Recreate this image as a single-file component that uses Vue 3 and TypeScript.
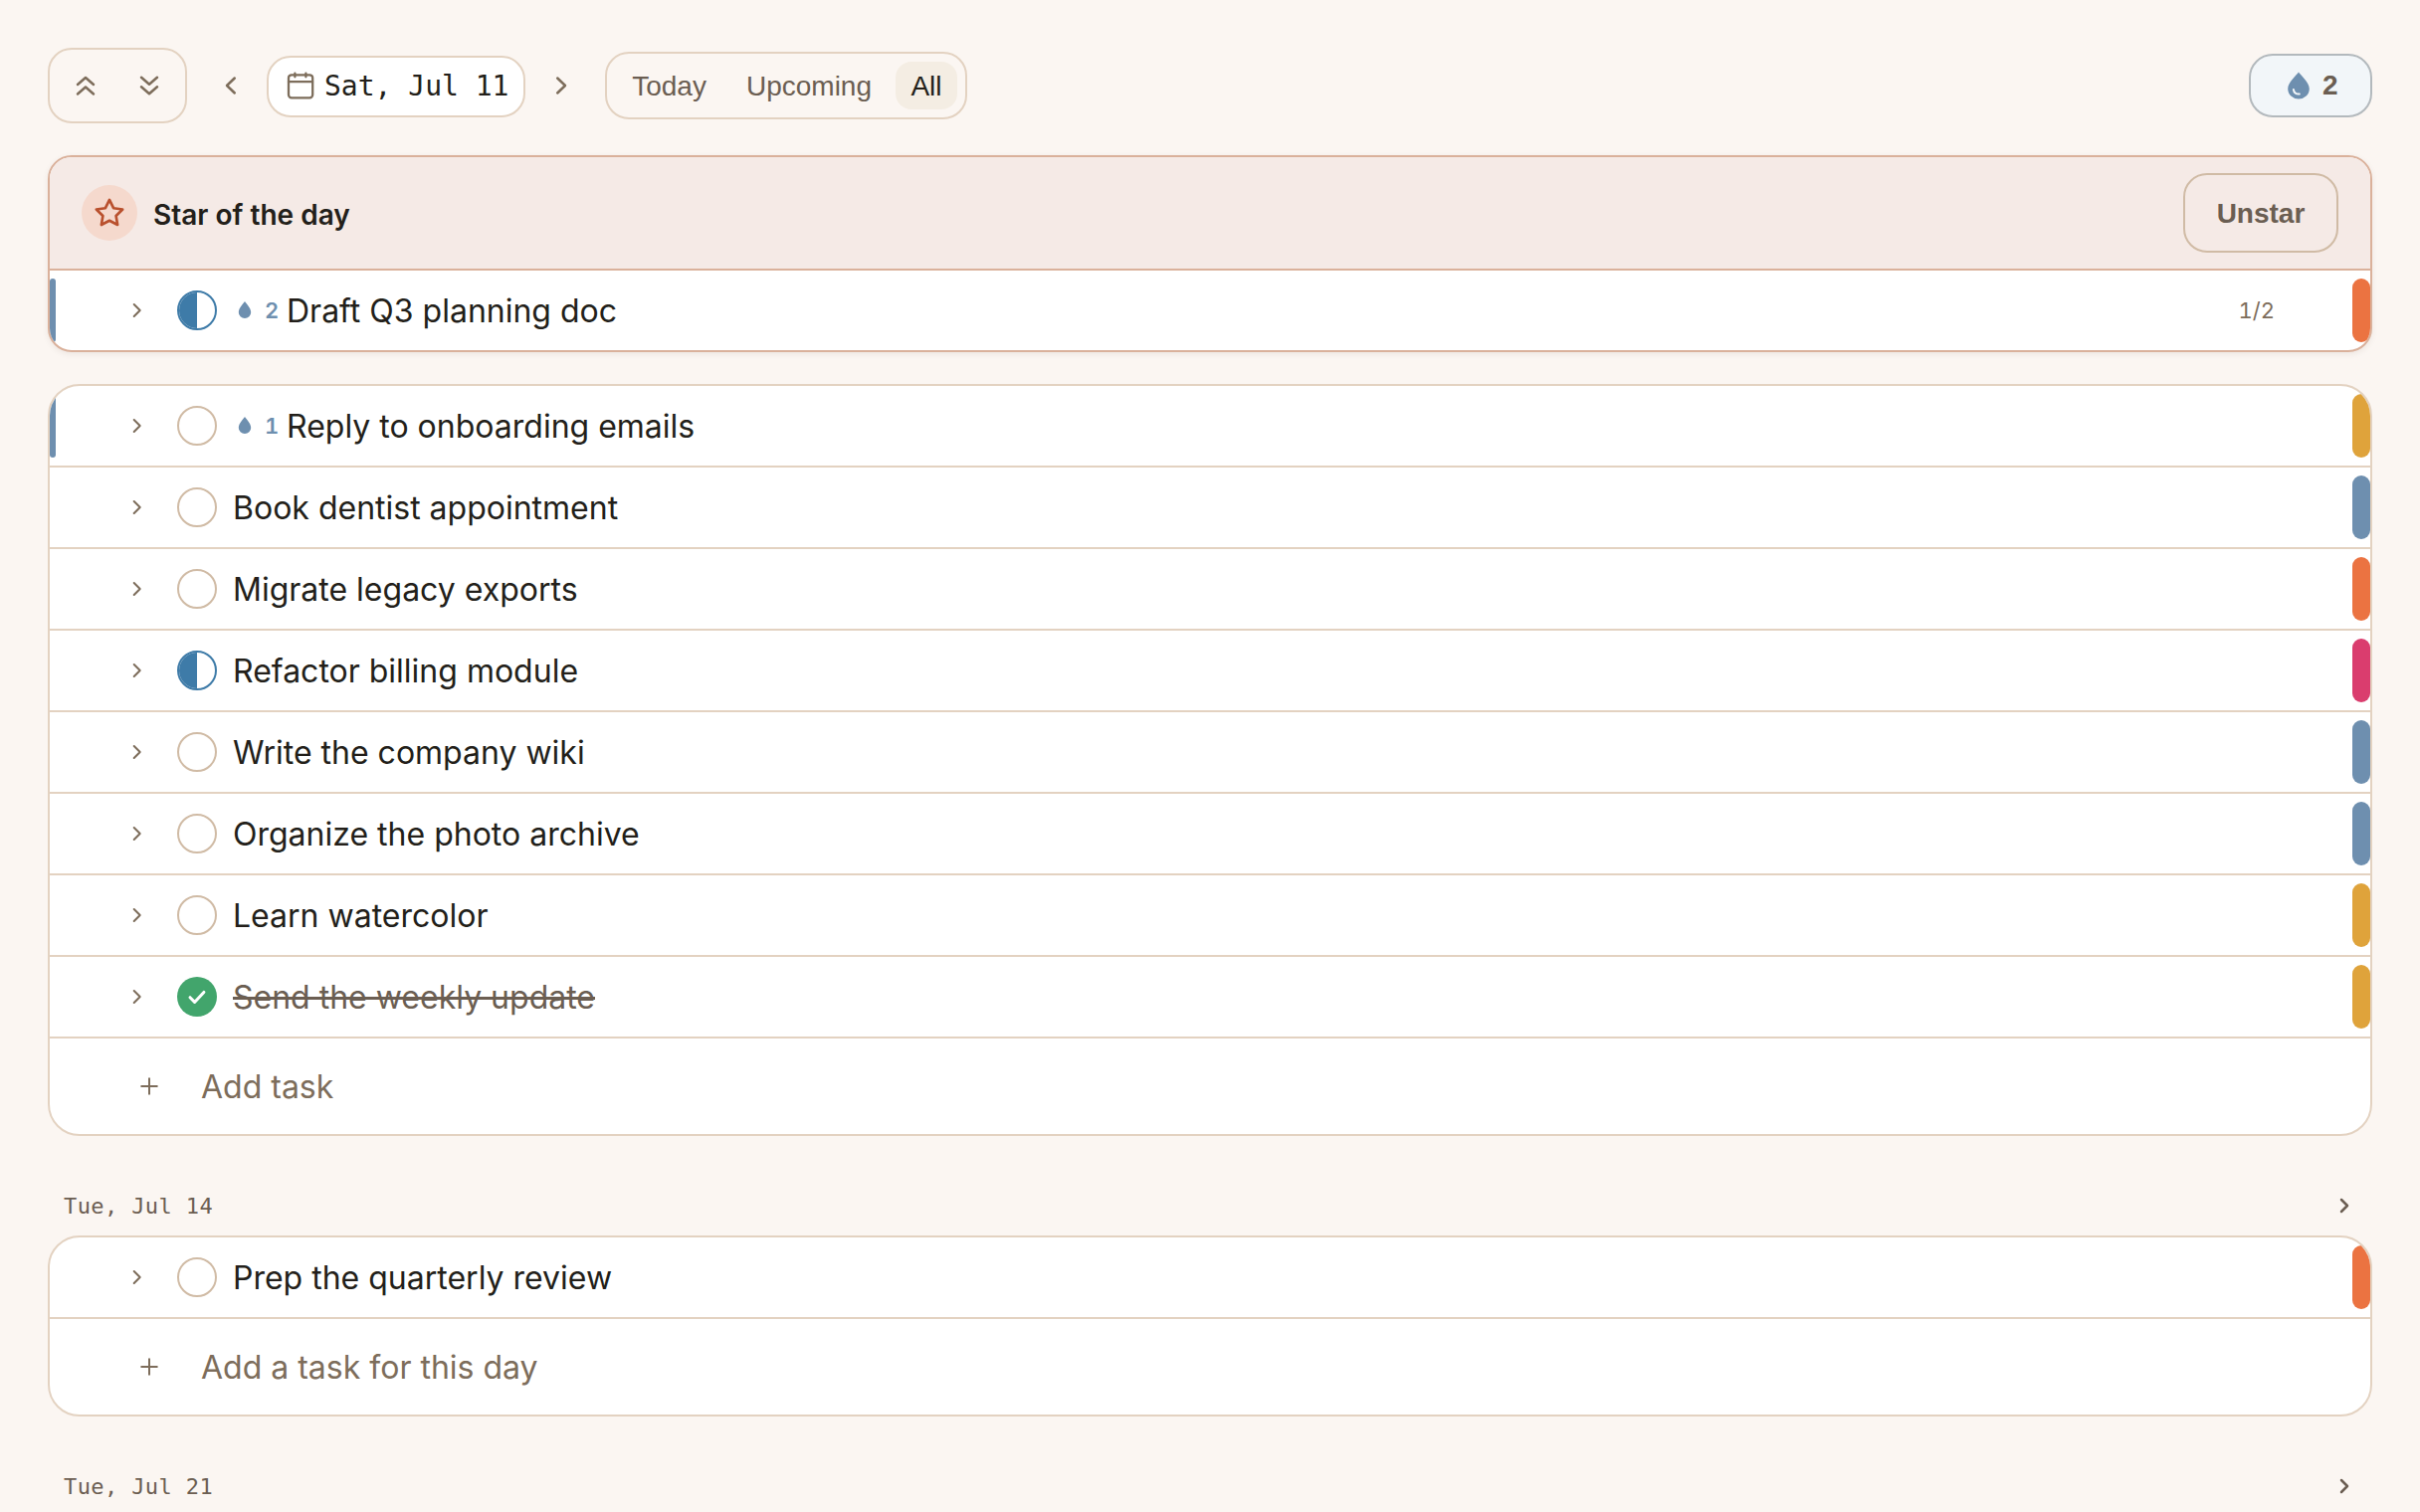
<script setup lang="ts">
type State = 'open' | 'half' | 'done'
type Tone = 'orange' | 'yellow' | 'blue' | 'pink'

interface Task {
  title: string
  state: State
  tone: Tone
  drops?: number
  progress?: string
}

interface Group {
  label?: string
  tasks: Task[]
  add: string
}

const starred: Task = { title: 'Draft Q3 planning doc', state: 'half', tone: 'orange', drops: 2, progress: '1/2' }

const groups: Group[] = [
  {
    add: 'Add task',
    tasks: [
      { title: 'Reply to onboarding emails', state: 'open', tone: 'yellow', drops: 1 },
      { title: 'Book dentist appointment', state: 'open', tone: 'blue' },
      { title: 'Migrate legacy exports', state: 'open', tone: 'orange' },
      { title: 'Refactor billing module', state: 'half', tone: 'pink' },
      { title: 'Write the company wiki', state: 'open', tone: 'blue' },
      { title: 'Organize the photo archive', state: 'open', tone: 'blue' },
      { title: 'Learn watercolor', state: 'open', tone: 'yellow' },
      { title: 'Send the weekly update', state: 'done', tone: 'yellow' },
    ],
  },
  {
    label: 'Tue, Jul 14',
    add: 'Add a task for this day',
    tasks: [{ title: 'Prep the quarterly review', state: 'open', tone: 'orange' }],
  },
]

const sections = [
  { starred: true, tasks: [starred], add: '', label: '' },
  ...groups.map((g) => ({ starred: false, label: '', ...g })),
]

const tabs = ['Today', 'Upcoming', 'All']
const active = 'All'
</script>

<template>
  <main class="page">
    <header class="toolbar">
      <div class="fold">
        <button class="fold-btn" aria-label="Collapse all">
          <svg width="32" height="32" viewBox="0 0 32 32"><path d="M8 15l8-7 8 7M8 24.5l8-7 8 7" /></svg>
        </button>
        <button class="fold-btn" aria-label="Expand all">
          <svg width="32" height="32" viewBox="0 0 32 32"><path d="M8 7.7l8 7 8-7M8 17.2l8 7 8-7" /></svg>
        </button>
      </div>
      <button class="step prev" aria-label="Previous day">
        <svg width="24" height="24" viewBox="0 0 24 24"><path d="M15.8 4.5L8 12l7.8 7.5" /></svg>
      </button>
      <button class="date">
        <svg width="28" height="28" viewBox="0 0 28 28">
          <rect x="2" y="3.3" width="24.2" height="23" rx="3" />
          <path d="M2 10.2h24M8.4 1.7v3.6M19.4 1.7v3.6" />
        </svg>
        <span>Sat, Jul 11</span>
      </button>
      <button class="step next" aria-label="Next day">
        <svg width="24" height="24" viewBox="0 0 24 24"><path d="M8.2 4.5L16 12l-7.8 7.5" /></svg>
      </button>
      <nav class="tabs">
        <button v-for="t in tabs" :key="t" class="tab" :class="{ active: t === active }">{{ t }}</button>
      </nav>
      <button class="tally">
        <svg width="24" height="28" viewBox="0 0 24 28">
          <path class="fill" d="M12 .4C13.6 3 22.8 10.8 22.8 17.2a10.8 10.3 0 0 1-21.6 0C1.2 10.8 10.4 3 12 .4z" />
          <path class="glint" d="M6.900 18.100c.4 2.800 2.800 4.600 5.900 4.500" />
        </svg>
        <span>2</span>
      </button>
    </header>

    <section v-for="(s, i) in sections" :key="i" class="section">
      <div v-if="s.label" class="day">
        <span>{{ s.label }}</span>
        <svg width="24" height="24" viewBox="0 0 24 24"><path d="M9 6l6 6-6 6" /></svg>
      </div>
      <div class="card" :class="{ star: s.starred }">
        <div v-if="s.starred" class="star-head">
          <span class="medal">
            <svg width="32" height="32" viewBox="0 0 24 24">
              <path d="M12 2.2l3.05 6.2 6.85 1-4.95 4.8 1.15 6.8L12 17.8 5.9 21l1.15-6.8L2.1 9.4l6.85-1z" />
            </svg>
          </span>
          <h2>Star of the day</h2>
          <button class="unstar">Unstar</button>
        </div>
        <div v-for="t in s.tasks" :key="t.title" class="row" :class="t.state">
          <i v-if="t.drops" class="edge" />
          <svg class="caret" width="24" height="24" viewBox="0 0 24 24"><path d="M8.7 6l6 6-6 6" /></svg>
          <span class="check">
            <svg v-if="t.state === 'done'" width="40" height="40" viewBox="0 0 40 40">
              <path d="M13 20.7l4.6 4.7 9.3-10" />
            </svg>
          </span>
          <span v-if="t.drops" class="drops">
            <svg width="24" height="24" viewBox="0 0 24 24">
              <path d="M12 3C13 4.7 18.2 9.5 18.2 13.9a6.2 6.1 0 0 1-12.4 0C5.8 9.5 11 4.7 12 3z" />
            </svg>
            <b>{{ t.drops }}</b>
          </span>
          <span class="title">{{ t.title }}</span>
          <span v-if="t.progress" class="progress">{{ t.progress }}</span>
          <i class="tone" :class="t.tone" />
        </div>
        <div v-if="s.add" class="add">
          <svg width="24" height="24" viewBox="0 0 24 24"><path d="M12 4.2v15.6M4.2 12h15.6" /></svg>
          <span>{{ s.add }}</span>
        </div>
      </div>
    </section>
    <div class="day last">
      <span>Tue, Jul 21</span>
      <svg width="24" height="24" viewBox="0 0 24 24"><path d="M9 6l6 6-6 6" /></svg>
    </div>
  </main>
</template>

<style>
body {
  background: #fbf6f2;
}
</style>

<style scoped>
.page {
  box-sizing: border-box;
  height: 1520px;
  overflow: hidden;
  padding: 48px;
  background: #fbf6f2;
  color: #231f1a;
  font-family: Inter, 'Liberation Sans', sans-serif;
}
.page * {
  box-sizing: border-box;
}
button {
  margin: 0;
  padding: 0;
  border: 0;
  background: none;
  font: 400 28px 'Liberation Sans', Arial, sans-serif;
  color: #6b5e52;
}
svg {
  display: block;
  flex: none;
  fill: none;
  stroke: #7d6d5b;
  stroke-width: 2.5;
  stroke-linecap: round;
  stroke-linejoin: round;
}

.toolbar {
  display: flex;
  align-items: center;
  height: 76px;
}
.fold {
  display: flex;
  align-items: center;
  justify-content: space-between;
  width: 140px;
  height: 76px;
  padding: 0 4px;
  border: 2px solid #e3d2c1;
  border-radius: 24px;
}
.fold-btn {
  display: flex;
  align-items: center;
  justify-content: center;
  width: 64px;
  height: 64px;
}
.step {
  display: flex;
  align-items: center;
  justify-content: center;
  width: 56px;
  height: 56px;
}
.prev {
  margin: 0 8px 0 16px;
}
.next {
  margin: 0 16px 0 8px;
}
.date {
  display: flex;
  align-items: center;
  gap: 10px;
  width: 260px;
  height: 62px;
  margin-top: 2px;
  padding: 0 0 2px 18px;
  border: 2px solid #e3d2c1;
  border-radius: 24px;
  background: #fff;
  color: #231f1a;
  font-family: 'DejaVu Sans Mono', 'Liberation Mono', monospace;
  white-space: nowrap;
}
.date svg {
  stroke-width: 2.3;
}
.tabs {
  display: flex;
  align-items: center;
  justify-content: flex-end;
  gap: 8px;
  width: 364px;
  height: 68px;
  padding: 0 8px;
  border: 2px solid #e3d2c1;
  border-radius: 24px;
}
.tab {
  flex: none;
  height: 48px;
  padding: 2px 16px 0;
  border-radius: 16px;
}
.tab.active {
  width: 62px;
  padding: 2px 0 0;
  background: #f4ede3;
  color: #231f1a;
}
.tally {
  display: flex;
  align-items: center;
  gap: 12px;
  width: 124px;
  height: 64px;
  margin-left: auto;
  padding-left: 36px;
  border: 2px solid #b3b9bd;
  border-radius: 24px;
  background: #f2f6f9;
  font-weight: 700;
}
.tally .fill {
  fill: #6e8faf;
  stroke: none;
}
.tally .glint {
  stroke: #f2f6f9;
  stroke-width: 2;
}

.section {
  margin-top: 32px;
}
.section:last-of-type {
  margin-top: 40px;
}
.card {
  overflow: hidden;
  border: 2px solid #e3d2c1;
  border-radius: 32px;
  background: #fff;
}
.card.star {
  border-color: #dab19b;
  border-radius: 24px;
  box-shadow: 0 2px 6px rgba(60, 40, 20, 0.08);
}
.star-head {
  display: flex;
  align-items: center;
  gap: 16px;
  height: 114px;
  padding: 0 32px;
  border-bottom: 2px solid #dab19b;
  background: #f5eae6;
}
.medal {
  display: flex;
  align-items: center;
  justify-content: center;
  width: 56px;
  height: 56px;
  border-radius: 50%;
  background: #f5d9cd;
}
.medal svg {
  stroke: #b9502d;
  stroke-width: 2;
}
h2 {
  margin: 4px 0 0;
  font-size: 28px;
  line-height: 40px;
  font-weight: 600;
}
.unstar {
  width: 156px;
  height: 80px;
  margin-left: auto;
  padding-top: 2px;
  border: 2px solid #d0bba5;
  border-radius: 24px;
  font-weight: 700;
}

.row {
  position: relative;
  display: flex;
  align-items: center;
  height: 80px;
  padding-left: 76px;
}
.row + .row,
.add {
  border-top: 2px solid #e3d2c1;
}
.row + .row {
  height: 82px;
}
.edge {
  position: absolute;
  left: 0;
  top: 8px;
  bottom: 8px;
  width: 6px;
  border-radius: 3px;
  background: #6e8faf;
}
.caret {
  stroke-width: 2;
}
.check {
  flex: none;
  width: 40px;
  height: 40px;
  margin: 0 16px 0 28px;
  border: 2px solid #d0bba5;
  border-radius: 50%;
}
.half .check {
  border-color: #3e7ba8;
  background: linear-gradient(90deg, #3e7ba8 50%, #fff 50%) padding-box;
}
.done .check {
  border: 0;
  background: #42a56c;
}
.done .check svg {
  stroke: #fff;
  stroke-width: 3;
}
.drops {
  display: flex;
  align-items: center;
  gap: 8px;
  margin-right: 8px;
}
.drops svg path {
  fill: #6e8faf;
  stroke: none;
}
.drops b {
  width: 14px;
  font-size: 22px;
  line-height: 28px;
  font-weight: 600;
  font-variant-numeric: tabular-nums;
  color: #6e8faf;
}
.title {
  margin-top: 2px;
  font-size: 32px;
  line-height: 48px;
  white-space: nowrap;
}
.done .title {
  color: #6b5e52;
  text-decoration: line-through;
}
.progress {
  margin-left: auto;
  margin-right: 96px;
  font-size: 22px;
  line-height: 28px;
  font-variant-numeric: tabular-nums;
  color: #7d6d5b;
}
.tone {
  position: absolute;
  right: 0;
  bottom: 8px;
  width: 18px;
  height: 64px;
  border-radius: 9px;
}
.orange {
  background: #eb7341;
}
.yellow {
  background: #dfa33b;
}
.blue {
  background: #6e8faf;
}
.pink {
  background: #da3d6e;
}
.add {
  display: flex;
  align-items: center;
  gap: 40px;
  height: 98px;
  padding-left: 88px;
  font-size: 32px;
  color: #7d6d5b;
}
.add svg {
  stroke-width: 2;
}

.day {
  display: flex;
  align-items: center;
  justify-content: space-between;
  height: 60px;
  padding: 0 16px;
  font: 400 22px/32px 'DejaVu Sans Mono', 'Liberation Mono', monospace;
  letter-spacing: 0.4px;
  color: #6b5e52;
}
.day span {
  margin-top: 2px;
}
.day svg {
  stroke: #6b5e52;
}
.day.last {
  margin-top: 40px;
}
</style>
